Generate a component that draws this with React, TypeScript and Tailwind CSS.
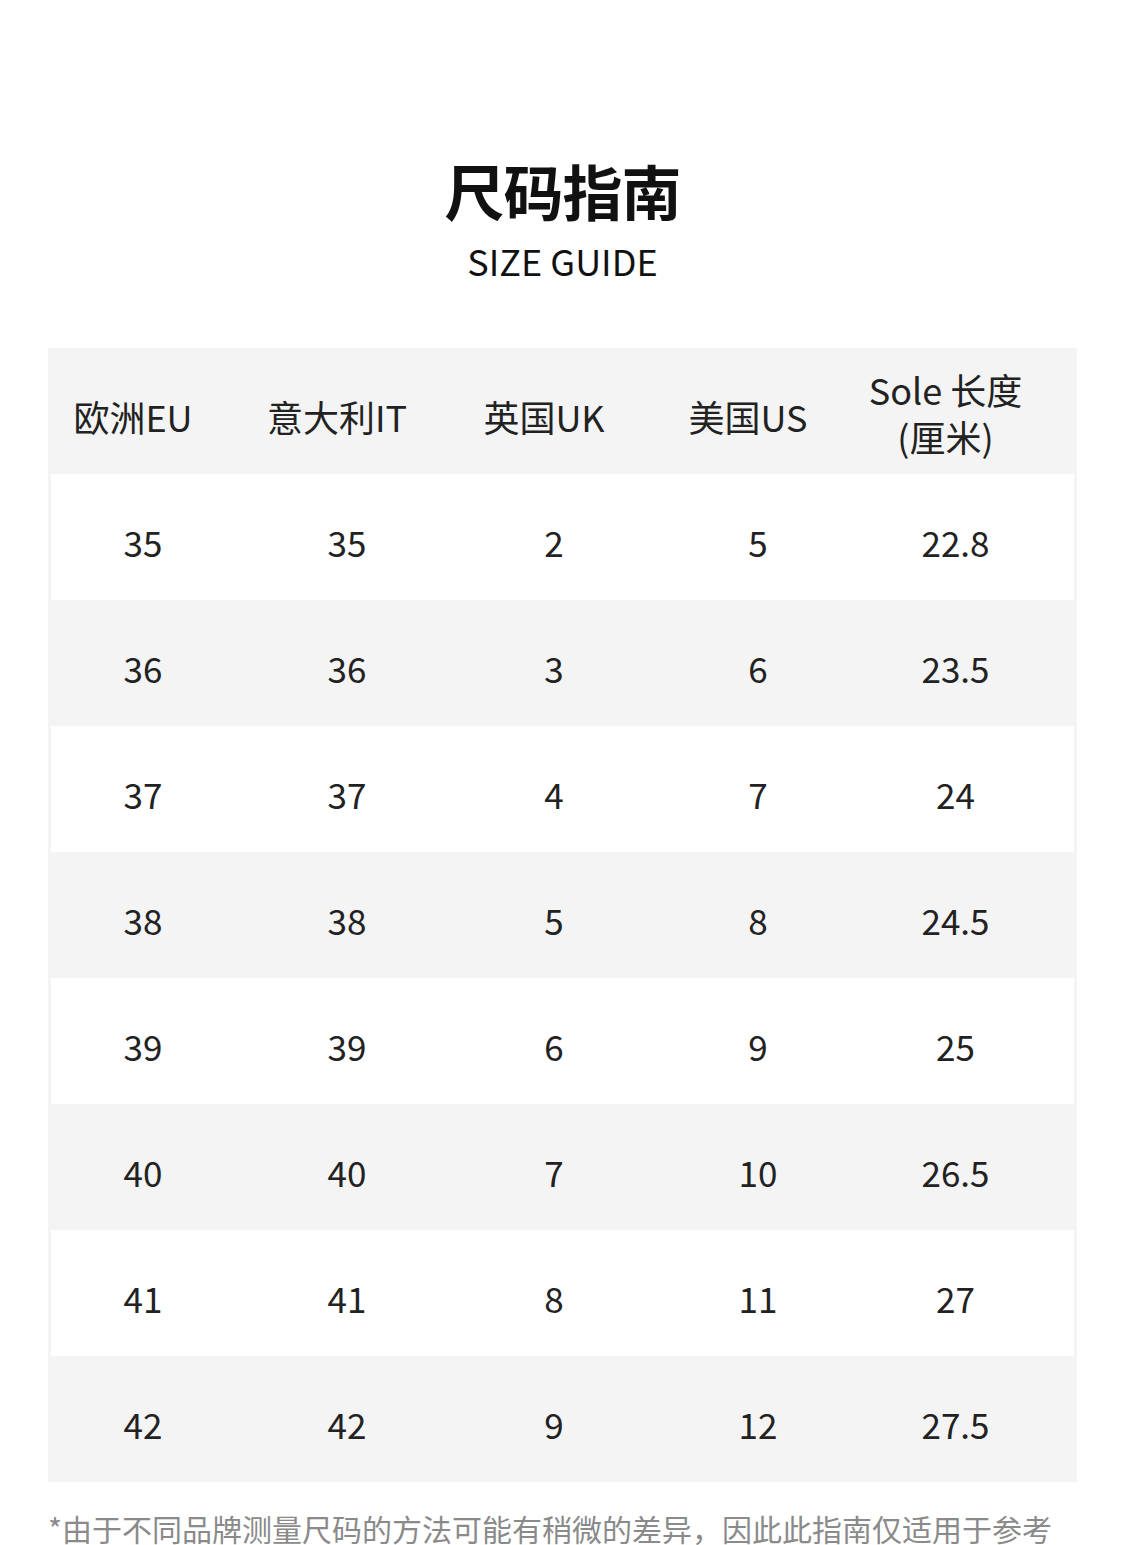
const headers = [
  ['欧洲EU'],
  ['意大利IT'],
  ['英国UK'],
  ['美国US'],
  ['Sole 长度', '(厘米)'],
]

const rows = [
  ['35', '35', '2', '5', '22.8'],
  ['36', '36', '3', '6', '23.5'],
  ['37', '37', '4', '7', '24'],
  ['38', '38', '5', '8', '24.5'],
  ['39', '39', '6', '9', '25'],
  ['40', '40', '7', '10', '26.5'],
  ['41', '41', '8', '11', '27'],
  ['42', '42', '9', '12', '27.5'],
]

const cols = 'grid grid-cols-[184px_224px_190px_218px_1fr]'

export default function App() {
  return (
    <div
      className="min-h-[1545px] bg-white text-[#222] overflow-hidden"
      style={{ fontFamily: '"Noto Sans CJK SC", "Noto Sans", sans-serif' }}
    >
      {/* Title */}
      <div className="pt-[154px] flex flex-col items-center">
        <h1 className="text-[60px] leading-[72px] font-bold tracking-[-1px] text-[#111]">尺码指南</h1>
        <p className="mt-[12px] text-[36px] leading-[44px] text-[#111]">SIZE GUIDE</p>
      </div>

      {/* Table */}
      <div className="mt-[66px] mx-[48px] bg-[#f4f4f4] px-[3px]">
        <div className={`${cols} h-[126px] items-center`}>
          {headers.map((h, i) => (
            <div
              key={i}
              className={`flex flex-col items-center text-[36px] leading-[47px] ${i === 4 ? 'pr-[50px] pt-[4px]' : 'pr-[20px] pt-[10px]'}`}
            >
              {h.map((line) => (
                <span key={line}>{line}</span>
              ))}
            </div>
          ))}
        </div>
        {rows.map((r, i) => (
          <div
            key={i}
            className={`${cols} h-[126px] items-center ${i % 2 === 0 ? 'bg-white' : 'bg-[#f4f4f4]'}`}
          >
            {r.map((v, j) => (
              <div key={j} className={`text-center pt-[10px] text-[35px] leading-[44px] ${j === 4 ? 'pr-[30px]' : ''}`}>
                {v}
              </div>
            ))}
          </div>
        ))}
      </div>

      {/* Note */}
      <p className="mt-[24px] ml-[48px] text-[30px] leading-[44px] text-[#8a8a8a] whitespace-nowrap">
        *由于不同品牌测量尺码的方法可能有稍微的差异，因此此指南仅适用于参考
      </p>
    </div>
  )
}
